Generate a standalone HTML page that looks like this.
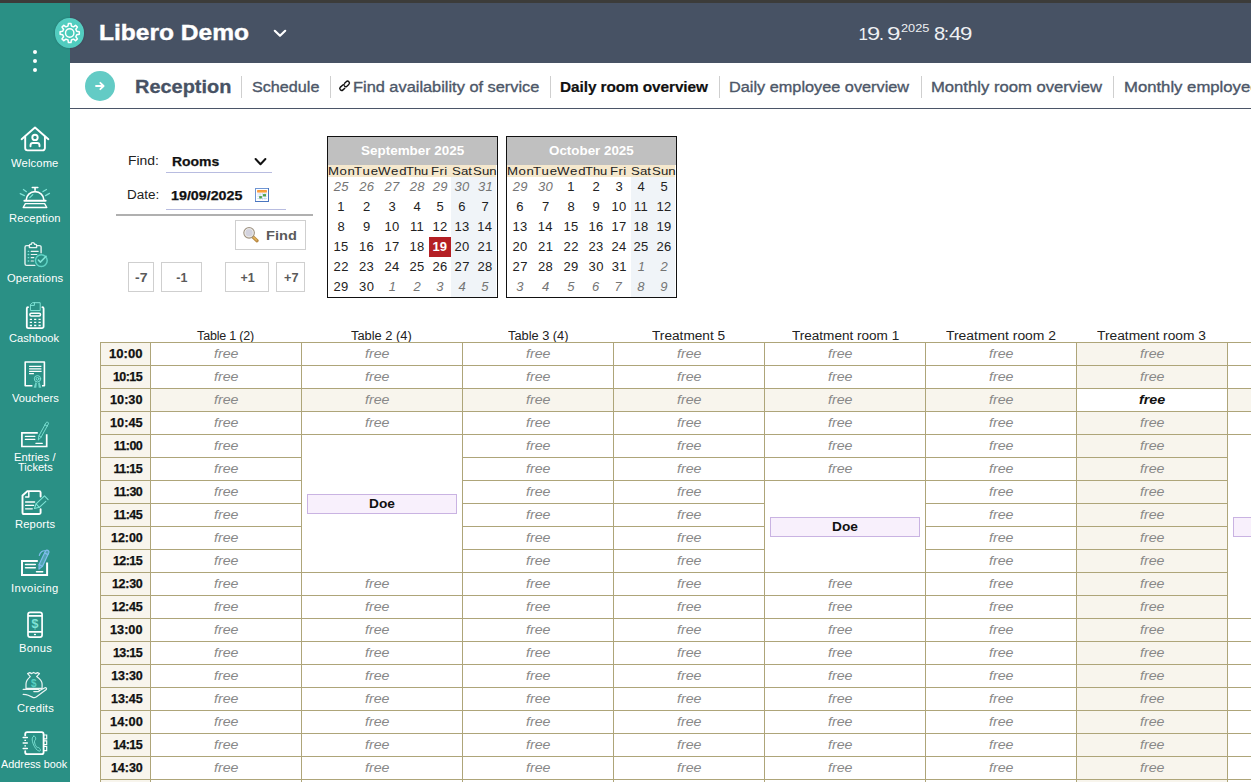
<!DOCTYPE html>
<html><head><meta charset="utf-8"><title>Reception</title>
<style>
*{box-sizing:border-box;margin:0;padding:0}
html,body{width:1251px;height:782px;overflow:hidden;background:#fff}
body{position:relative;font-family:"Liberation Sans", sans-serif;color:#222}
.abs{position:absolute}
#topstrip{left:0;top:0;width:1251px;height:3px;background:#3c3c3a;z-index:5}
#side{left:0;top:0;width:70px;height:782px;background:#2a9085}
#head{left:70px;top:0;width:1181px;height:63px;background:#475264}
#nav{left:70px;top:63px;width:1181px;height:46px;background:#fff;border-bottom:1px solid #4b5567}
.t{position:absolute;white-space:nowrap}
.sep{position:absolute;top:76px;width:1px;height:22px;background:#cfcfcf}
.cell{position:absolute;border:1px solid #aea579;background:#fff}
.cr{background:#f8f5ed}
.tm{position:absolute;border:1px solid #aea579;background:#f8f5ed}
.doe{position:absolute;height:20px;width:150px;background:#f8f0fc;border:1px solid #c9b3e2}
.btn{position:absolute;border:1px solid #cfcfcf;background:#fff}
.cal{position:absolute;top:136px;width:171px;height:162px;border:1px solid #111;background:#fff}
.calh{position:absolute;left:0;top:0;width:169px;height:28px;background:#c0c0c0}
.calw{position:absolute;left:0;top:28px;width:168px;height:12px;background:#f5e8cd}
.we{position:absolute;top:40px;height:120px;background:#f0f4f8}
</style></head>
<body>
<div id="side" class="abs"></div>
<div id="head" class="abs"></div>
<div id="topstrip" class="abs"></div>
<div id="nav" class="abs"></div>
<header>
<div class="abs" style="left:54.6px;top:18px;width:29.6px;height:29.6px;border-radius:50%;background:radial-gradient(circle at 50% 55%,#4acbb9 0%,#52cdc0 60%,#63d3ca 100%);box-shadow:0 0 2px rgba(20,40,50,.35)"></div>
<svg class="abs" style="left:50px;top:14px" width="40" height="40" viewBox="50 14 40 40" fill="none" stroke="#fff" stroke-linejoin="round"><path d="M68.02 26.00 L68.41 23.39 L70.99 23.39 L71.38 26.00 L73.46 26.86 L75.58 25.29 L77.41 27.12 L75.84 29.24 L76.70 31.32 L79.31 31.71 L79.31 34.29 L76.70 34.68 L75.84 36.76 L77.41 38.88 L75.58 40.71 L73.46 39.14 L71.38 40.00 L70.99 42.61 L68.41 42.61 L68.02 40.00 L65.94 39.14 L63.82 40.71 L61.99 38.88 L63.56 36.76 L62.70 34.68 L60.09 34.29 L60.09 31.71 L62.70 31.32 L63.56 29.24 L61.99 27.12 L63.82 25.29 L65.94 26.86 Z" stroke-width="1.5"/><circle cx="69.7" cy="33" r="4.2" stroke-width="1.4"/></svg>
<div class="t" style="left:99.28px;top:20.00px;font-size:22.5px;line-height:25px;color:#fff;letter-spacing:0.000px;font-weight:bold;-webkit-text-stroke:0.4px #fff;transform:scaleX(1.091);transform-origin:0 0;">Libero Demo</div>
<svg class="abs" style="left:273px;top:27px" width="14" height="12" viewBox="0 0 14 12"><path d="M1.8 3.8 L7 8.8 L12.2 3.8" fill="none" stroke="#fff" stroke-width="2.2" stroke-linecap="round" stroke-linejoin="round"/></svg>
<div class="t" style="left:858.56px;top:25.00px;font-size:17px;line-height:19px;color:#eef0f3;letter-spacing:0.000px;">1</div>
<div class="t" style="left:866.81px;top:24.00px;font-size:18px;line-height:20px;color:#eef0f3;letter-spacing:0.000px;transform:scaleX(1.320);transform-origin:0 0;">9</div>
<div class="t" style="left:878.59px;top:24.00px;font-size:18px;line-height:20px;color:#eef0f3;letter-spacing:0.000px;transform:scaleX(0.984);transform-origin:0 0;">.</div>
<div class="t" style="left:886.89px;top:24.00px;font-size:18px;line-height:20px;color:#eef0f3;letter-spacing:0.000px;transform:scaleX(1.344);transform-origin:0 0;">9</div>
<div class="t" style="left:898.18px;top:24.00px;font-size:18px;line-height:20px;color:#eef0f3;letter-spacing:0.000px;transform:scaleX(0.868);transform-origin:0 0;">.</div>
<div class="t" style="left:933.63px;top:24.00px;font-size:18px;line-height:20px;color:#eef0f3;letter-spacing:0.000px;transform:scaleX(1.123);transform-origin:0 0;">8</div>
<div class="t" style="left:944.39px;top:24.00px;font-size:18px;line-height:20px;color:#eef0f3;letter-spacing:0.000px;transform:scaleX(0.984);transform-origin:0 0;">:</div>
<div class="t" style="left:948.51px;top:24.00px;font-size:18px;line-height:20px;color:#eef0f3;letter-spacing:0.000px;transform:scaleX(1.232);transform-origin:0 0;">4</div>
<div class="t" style="left:959.78px;top:24.00px;font-size:18px;line-height:20px;color:#eef0f3;letter-spacing:0.000px;transform:scaleX(1.236);transform-origin:0 0;">9</div>
<div class="t" style="left:901.36px;top:22.00px;font-size:11.5px;line-height:12px;color:#eef0f3;letter-spacing:0.000px;transform:scaleX(1.109);transform-origin:0 0;">2025</div>
</header>
<aside>
<div class="abs" style="left:33px;top:50px;width:4px;height:4px;border-radius:50%;background:#fff"></div>
<div class="abs" style="left:33px;top:59px;width:4px;height:4px;border-radius:50%;background:#fff"></div>
<div class="abs" style="left:33px;top:68px;width:4px;height:4px;border-radius:50%;background:#fff"></div>
</aside>
<nav>
<div class="abs" style="left:85px;top:71px;width:30px;height:30px;border-radius:50%;background:#63cbc5"></div>
<svg class="abs" style="left:94px;top:80px" width="12" height="12" viewBox="0 0 12 12"><path d="M2 6 H9.5 M6.3 2.8 L9.6 6 L6.3 9.2" fill="none" stroke="#fff" stroke-width="1.8" stroke-linecap="round" stroke-linejoin="round"/></svg>
<div class="t" style="left:134.98px;top:76.00px;font-size:18.5px;line-height:21px;color:#475264;letter-spacing:0.000px;font-weight:bold;-webkit-text-stroke:0.3px #475264;transform:scaleX(1.077);transform-origin:0 0;">Reception</div>
<div class="t" style="left:252.07px;top:78.00px;font-size:15.4px;line-height:17px;color:#4d5768;letter-spacing:0.000px;-webkit-text-stroke:0.35px #4d5768;transform:scaleX(1.050);transform-origin:0 0;">Schedule</div>
<div class="t" style="left:352.76px;top:78.00px;font-size:15.4px;line-height:17px;color:#4d5768;letter-spacing:0.000px;-webkit-text-stroke:0.35px #4d5768;transform:scaleX(1.063);transform-origin:0 0;">Find availability of service</div>
<div class="t" style="left:560.08px;top:78.00px;font-size:15.4px;line-height:17px;color:#111;letter-spacing:-0.100px;font-weight:bold;-webkit-text-stroke:0.2px #111;">Daily room overview</div>
<div class="t" style="left:729.26px;top:78.00px;font-size:15.4px;line-height:17px;color:#4d5768;letter-spacing:0.000px;-webkit-text-stroke:0.35px #4d5768;transform:scaleX(1.058);transform-origin:0 0;">Daily employee overview</div>
<div class="t" style="left:931.34px;top:78.00px;font-size:15.4px;line-height:17px;color:#4d5768;letter-spacing:0.000px;-webkit-text-stroke:0.35px #4d5768;transform:scaleX(1.081);transform-origin:0 0;">Monthly room overview</div>
<div class="t" style="left:1124.03px;top:78.00px;font-size:15.4px;line-height:17px;color:#4d5768;letter-spacing:0.000px;-webkit-text-stroke:0.35px #4d5768;transform:scaleX(1.085);transform-origin:0 0;">Monthly employee overview</div>
<div class="sep" style="left:241px"></div>
<div class="sep" style="left:330px"></div>
<div class="sep" style="left:550px"></div>
<div class="sep" style="left:719px"></div>
<div class="sep" style="left:921px"></div>
<div class="sep" style="left:1113px"></div>
<svg class="abs" style="left:334px;top:76px" width="24" height="24" viewBox="334 76 24 24" fill="none" stroke="#111" stroke-width="1.55"><g transform="translate(344.6,85.8) rotate(-43) scale(0.9)"><path d="M-1.2 2.1 H-4.4 a2.1 2.1 0 0 1 0 -4.2 H-1.6 a2.1 2.1 0 0 1 2.1 2.1"/><path d="M1.2 -2.1 H4.4 a2.1 2.1 0 0 1 0 4.2 H1.6 a2.1 2.1 0 0 1 -2.1 -2.1"/></g></svg>
</nav>
<aside>
<div class="t" style="left:11.46px;top:158.00px;font-size:10px;line-height:11px;color:#fff;letter-spacing:0.129px;transform:scaleX(1.120);transform-origin:0 0;">Welcome</div>
<div class="t" style="left:9.08px;top:213.00px;font-size:10px;line-height:11px;color:#fff;letter-spacing:0.123px;transform:scaleX(1.120);transform-origin:0 0;">Reception</div>
<div class="t" style="left:6.87px;top:273.00px;font-size:10px;line-height:11px;color:#fff;letter-spacing:0.133px;transform:scaleX(1.120);transform-origin:0 0;">Operations</div>
<div class="t" style="left:9.44px;top:333.00px;font-size:10px;line-height:11px;color:#fff;letter-spacing:0.000px;transform:scaleX(1.113);transform-origin:0 0;">Cashbook</div>
<div class="t" style="left:11.96px;top:393.00px;font-size:10px;line-height:11px;color:#fff;letter-spacing:0.007px;transform:scaleX(1.120);transform-origin:0 0;">Vouchers</div>
<div class="t" style="left:13.68px;top:452.00px;font-size:10px;line-height:11px;color:#fff;letter-spacing:0.060px;transform:scaleX(1.120);transform-origin:0 0;">Entries /</div>
<div class="t" style="left:17.86px;top:462.00px;font-size:10px;line-height:11px;color:#fff;letter-spacing:0.000px;transform:scaleX(1.110);transform-origin:0 0;">Tickets</div>
<div class="t" style="left:14.88px;top:519.00px;font-size:10px;line-height:11px;color:#fff;letter-spacing:0.121px;transform:scaleX(1.120);transform-origin:0 0;">Reports</div>
<div class="t" style="left:10.97px;top:583.00px;font-size:10px;line-height:11px;color:#fff;letter-spacing:0.351px;transform:scaleX(1.120);transform-origin:0 0;">Invoicing</div>
<div class="t" style="left:18.58px;top:643.00px;font-size:10px;line-height:11px;color:#fff;letter-spacing:0.239px;transform:scaleX(1.120);transform-origin:0 0;">Bonus</div>
<div class="t" style="left:16.64px;top:703.00px;font-size:10px;line-height:11px;color:#fff;letter-spacing:0.191px;transform:scaleX(1.120);transform-origin:0 0;">Credits</div>
<div class="t" style="left:1.18px;top:759.00px;font-size:10px;line-height:11px;color:#fff;letter-spacing:0.000px;transform:scaleX(1.084);transform-origin:0 0;">Address book</div>
<svg class="abs" style="left:0;top:0" width="70" height="782" viewBox="0 0 70 782" fill="none" stroke-linecap="round" stroke-linejoin="round"><g stroke="#ffffff" stroke-width="1.9"><path d="M21.6 139.2 L35 127.5 L48.4 139.2"/><path d="M25.2 136.6 V148.1 a2.3 2.3 0 0 0 2.3 2.3 H42.6 a2.3 2.3 0 0 0 2.3 -2.3 V136.6"/><circle cx="35" cy="137.4" r="2.7"/><path d="M30.5 146.3 v-0.9 a2.4 2.4 0 0 1 2.4 -2.4 h4.2 a2.4 2.4 0 0 1 2.4 2.4 v0.9"/></g><g stroke="#ffffff" stroke-width="1.6"><path d="M32.3 187.5 H37.8 M35.05 187.5 V190.2"/><path d="M26.2 200 a8.85 8.4 0 0 1 17.7 0"/><path d="M24.4 200.8 H45.6" stroke-width="2"/><path d="M25.4 203.6 H44.6 L46.8 207.5 H23.2 Z" stroke-width="1.4"/></g><g stroke="#7fe3d6" stroke-width="1.2"><path d="M29.8 197.6 L32.8 194.6"/><path d="M23.4 189.5 L26.4 191.7"/><path d="M20.2 193.6 L24.4 195.6"/><path d="M43 191.6 L46.5 189.5"/><path d="M45.5 195.6 L49.5 193.4"/></g><g stroke="#ffffff" stroke-opacity="0.88" stroke-width="1.4"><path d="M29.2 245.6 H26.6 a1.6 1.6 0 0 0 -1.6 1.6 V263.8 a1.6 1.6 0 0 0 1.6 1.6 H34.8"/><path d="M36.8 245.6 H39.5 a1.6 1.6 0 0 1 1.6 1.6 V252.8"/><path d="M29.4 247.6 V245.2 a0.8 0.8 0 0 1 0.8 -0.8 H31.2 a1.75 1.75 0 0 1 3.5 0 H35.8 a0.8 0.8 0 0 1 0.8 0.8 V247.6 Z"/></g><g stroke="#7fe3d6" stroke-width="1.3"><path d="M28.2 251.3 h0.5 M28.2 254.5 h0.5 M28.2 257.7 h0.5 M28.2 261 h0.5"/></g><g stroke="#ffffff" stroke-opacity="0.9" stroke-width="1.2"><path d="M31.2 251.3 H38.2 M31.2 254.5 H36.8 M31.2 257.7 H33.8 M31.2 261 H33.4"/></g><g stroke="#5fd3c5" stroke-width="1.5"><circle cx="41.3" cy="260.6" r="5.9"/><path d="M38.4 260.1 L40.4 262.1 L46.1 256.3" stroke="#7fe3d6"/></g><g stroke="#ffffff" stroke-width="1.8"><path d="M28 307.2 a1.2 1.2 0 0 0 -1.2 1.2 V326.6 a1.6 1.6 0 0 0 1.6 1.6 H42 a1.6 1.6 0 0 0 1.6 -1.6 V308.4 a1.2 1.2 0 0 0 -1.2 -1.2"/><rect x="29.9" y="313.2" width="10.6" height="2.8" rx="1.2" stroke-width="1.5"/></g><g stroke="#7fe3d6" stroke-width="1"><path d="M30.4 310.2 V304.6 L32.6 302.7 H40.2 V310.2 Z"/><path d="M30.4 305.4 H34.4 V302.7"/></g><path d="M29.8 319.4 h2.2 M34.1 319.4 h2.2 M38.5 319.4 h2.2 M29.8 322.4 h2.2 M34.1 322.4 h2.2 M38.5 322.4 h2.2 M29.8 325.5 h2.2 M34.1 325.5 h2.2 M38.5 325.5 h2.2 " stroke="#ffffff" stroke-width="1.3" stroke-linecap="butt"/><g stroke="#ffffff" stroke-width="1.6" stroke-linecap="square"><path d="M31.6 385.8 H25.2 V362 H44.4 V385.8 H42.8"/></g><g stroke="#ffffff" stroke-width="1.25" stroke-linecap="butt"><path d="M29.1 366.3 H41.4 M29.1 368.8 H41.4 M29.1 371.4 H41.6 M29.1 373.7 H33.9"/></g><g stroke="#7fe3d6" stroke-width="1" fill="none"><circle cx="37.5" cy="378.8" r="3.2"/><circle cx="37.5" cy="378.8" r="1.4"/><path d="M35.4 382.2 L33.7 387.7 L36.3 387.7 L36.9 383 Z" fill="#7fe3d6" fill-opacity="0.8" stroke="none"/><path d="M39.6 382.2 L41.3 387.7 L38.7 387.7 L38.1 383 Z" fill="#7fe3d6" fill-opacity="0.8" stroke="none"/></g><g stroke="#ffffff" stroke-width="1.7" stroke-linecap="butt" stroke-linejoin="miter"><path d="M37.8 432.8 H21.9 V446.5 H46.7 V434.2"/></g><g stroke="#ffffff" stroke-width="1.3"><path d="M25.4 436.4 H34.8 M25.4 439.4 H34.8 M35.9 443.3 H42.3"/></g><g stroke="#7fe3d6" stroke-width="0.9"><path d="M38.3 439.7 L38.9 435.9 L46.1 422.7 A1.3 1.3 0 0 1 48.4 423.9 L41.1 437.1 Z"/><path d="M38.9 435.9 L41.1 437.1 M44.9 424.9 L47.2 426.1"/></g><g stroke="#ffffff" stroke-width="1.9"><path d="M40.6 496.6 V492.6 a1.5 1.5 0 0 0 -1.5 -1.5 H27.6 L22.5 495.4 V512.4 a1.6 1.6 0 0 0 1.6 1.6 H39 a1.6 1.6 0 0 0 1.6 -1.6 V509.2"/><path d="M28.8 491.8 V497 H25.6" stroke-width="1.5"/></g><g stroke="#ffffff" stroke-width="1.35"><path d="M25.6 502 H34.6 M25.6 505.4 H33.6 M25.6 508.8 H32.3"/></g><g stroke="#7fe3d6" stroke-width="1.1"><path d="M34.5 508.5 L36.1 503.8 L44.5 495.9 L48.1 499.6"/><path d="M45.8 501.3 L39.3 507.3 L34.5 508.5"/><path d="M36.1 503.8 L39.3 507.3"/></g><g stroke="#ffffff" stroke-width="2" stroke-linecap="butt" stroke-linejoin="miter"><path d="M37.8 561 H22 V575 H47.1 V562.6"/></g><g stroke="#ffffff" stroke-width="1.5"><path d="M25.5 564.6 H35.3 M25.5 567.8 H35.3 M36.5 571.7 H42.7"/></g><g stroke="#7fbcec" stroke-width="1.2" fill="#7fbcec" fill-opacity="0.45"><path d="M39 569.1 L39.1 564.6 L45.5 551 A1.9 1.9 0 0 1 48.9 552.6 L42.5 566.3 Z"/><path d="M45.4 550.9 C42.6 550.2 40 552.4 39.3 555.5" fill="none"/><path d="M44.6 553 L47.9 554.6 M39.1 564.6 L42.5 566.3" fill="none"/></g><g stroke="#ffffff" stroke-width="1.7"><rect x="28" y="612.3" width="14.1" height="24.8" rx="2.2"/><path d="M28 615.8 H42.1 M28 631.9 H42.1" stroke-linecap="butt"/><path d="M34.6 634.6 h0.7" stroke-width="1.5"/></g><text x="35" y="628.2" text-anchor="middle" font-family="Liberation Sans, sans-serif" font-weight="bold" font-size="12.5" fill="#7fe3d6" stroke="none">$</text><g stroke="#ffffff" stroke-opacity="0.9" stroke-width="1.2"><path d="M27.6 673.6 L30.3 676.6 C27.4 679 26 681.4 26 684 V688.4 H42.1 V684 C42.1 681.4 40 679 36.6 676.6 L39.5 673.6 L37.5 672.6 L35.6 673.6 L33.6 672.4 L31.7 673.6 L29.8 672.6 Z"/><path d="M23.2 689.4 H38.2 a1.1 1.1 0 0 1 0 2.2 H33.8"/><path d="M39.4 690.6 L45 687.8 a1.1 1.1 0 0 1 1.3 1.7 L36.2 696.9 a3.2 3.2 0 0 1 -3.4 0.5 L28.2 695.2 C26.6 694.5 25 694.4 23.2 694.4"/></g><text x="33.8" y="686.6" text-anchor="middle" font-family="Liberation Sans, sans-serif" font-weight="bold" font-size="10" fill="#58cfc1" stroke="none">$</text><g stroke="#ffffff" stroke-width="1.8"><path d="M25.2 735.4 V734.2 a2 2 0 0 1 2 -2 H41.6 a2 2 0 0 1 2 2 V752.2 a2 2 0 0 1 -2 2 H27.2 a2 2 0 0 1 -2 -2 V751.2" /><path d="M25.2 739.8 V741 M25.2 745.2 V746.6" stroke-width="1.6" stroke-linecap="butt"/></g><g stroke="#ffffff" stroke-width="1.5"><path d="M23.2 737.5 H27.3 M23.2 742.9 H27.3 M23.2 748.4 H27.3"/></g><g stroke="#ffffff" stroke-width="1.15" stroke-linecap="butt" stroke-linejoin="miter"><path d="M44 735 H46.7 V738.9 H44 M44 740.8 H46.7 V744.6 H44 M44 746.5 H46.7 V750.6 H44"/></g><g stroke="#7fe3d6" stroke-width="0.9"><path d="M33.4 736.3 c-1.6 0.8 -1.7 3.8 -0.2 7.6 c1.5 3.8 3.8 6.8 5.9 7.2 c1.2 0.2 1.7 -0.8 1.2 -1.8 c-0.5 -1 -1.7 -2 -2.7 -1.9 c-0.9 0.1 -1.6 -0.9 -2.4 -2.9 c-0.8 -2 -1 -3.6 -0.3 -4.1 c0.9 -0.6 1 -2.2 0.5 -3.2 c-0.5 -1 -1.3 -1.3 -2 -0.9 z"/></g></svg>
</aside>
<section id="filters">
<div class="t" style="left:128.36px;top:154.00px;font-size:12.5px;line-height:14px;color:#222;letter-spacing:0.000px;transform:scaleX(1.112);transform-origin:0 0;">Find:</div>
<div class="t" style="left:172.28px;top:154.00px;font-size:13px;line-height:15px;color:#111;letter-spacing:-0.000px;font-weight:bold;-webkit-text-stroke:0.25px #111;transform:scaleX(1.073);transform-origin:0 0;">Rooms</div>
<svg class="abs" style="left:253px;top:156px" width="15" height="12" viewBox="0 0 15 12"><path d="M2.6 3 L7.5 8.2 L12.4 3" fill="none" stroke="#111" stroke-width="2" stroke-linecap="round" stroke-linejoin="round"/></svg>
<div class="abs" style="left:166px;top:172px;width:106px;height:1px;background:#b8bce0"></div>
<div class="t" style="left:126.99px;top:188.00px;font-size:12.5px;line-height:14px;color:#222;letter-spacing:0.000px;transform:scaleX(1.079);transform-origin:0 0;">Date:</div>
<div class="t" style="left:170.51px;top:188.00px;font-size:13px;line-height:15px;color:#111;letter-spacing:0.000px;font-weight:bold;-webkit-text-stroke:0.25px #111;transform:scaleX(1.098);transform-origin:0 0;">19/09/2025</div>
<svg class="abs" style="left:254px;top:187px" width="16" height="16" viewBox="254 187 16 16"><rect x="255.5" y="188.5" width="13" height="13" fill="#fff" stroke="#7096d3" stroke-width="1"/><path d="M255 201.5 H269 M268.5 188 V202" stroke="#4a76bf" stroke-width="1" fill="none"/><rect x="257.2" y="190.1" width="9.6" height="2.4" fill="#f6862a"/><rect x="258" y="190.8" width="8" height="1" fill="#fbb03b"/><path d="M257.5 194 H267 M257.5 196.2 H267 M257.5 198.5 H267 M260 193.5 V200 M262.5 193.5 V200 M265 193.5 V200" stroke="#a9c6ea" stroke-width="0.8" stroke-dasharray="1.2 0.8" fill="none"/><rect x="263" y="194.1" width="3" height="2.3" fill="#4ea34a"/><rect x="259.2" y="196.1" width="2.7" height="2.3" fill="#4ea34a"/></svg>
<div class="abs" style="left:166px;top:209px;width:120px;height:1px;background:#b8bce0"></div>
<div class="abs" style="left:116px;top:214px;width:197px;height:2px;background:#b0b0b0"></div>
<div class="btn" style="left:235px;top:220px;width:71px;height:30px"></div>
<div class="t" style="left:266.24px;top:228.00px;font-size:13px;line-height:15px;color:#5a5a5a;letter-spacing:0.055px;font-weight:bold;transform:scaleX(1.120);transform-origin:0 0;">Find</div>
<svg class="abs" style="left:240px;top:224px" width="22" height="22" viewBox="240 224 22 22"><path d="M253 237 L257 240.7" stroke="#b98a45" stroke-width="3.3" stroke-linecap="round"/><path d="M253.2 237 L256.4 240" stroke="#e2b45a" stroke-width="1.6" stroke-linecap="round"/><circle cx="249.1" cy="232.8" r="5.2" fill="#d3d3de" stroke="#a09483" stroke-width="1.3"/><circle cx="249.1" cy="232.8" r="4.1" fill="none" stroke="#f3f0ea" stroke-width="0.9"/></svg>
<div class="btn" style="left:128px;top:262px;width:26px;height:30px"></div>
<div class="t" style="left:135.15px;top:271.00px;font-size:12.5px;line-height:14px;color:#5a5a5a;letter-spacing:0.180px;font-weight:bold;transform:scaleX(1.120);transform-origin:0 0;">-7</div>
<div class="btn" style="left:161px;top:262px;width:41px;height:30px"></div>
<div class="t" style="left:176.31px;top:271.00px;font-size:12.5px;line-height:14px;color:#5a5a5a;letter-spacing:0.000px;font-weight:bold;">-1</div>
<div class="btn" style="left:225px;top:262px;width:44px;height:30px"></div>
<div class="t" style="left:240.47px;top:271.00px;font-size:12.5px;line-height:14px;color:#5a5a5a;letter-spacing:0.000px;font-weight:bold;">+1</div>
<div class="btn" style="left:276px;top:262px;width:29px;height:30px"></div>
<div class="t" style="left:283.67px;top:271.00px;font-size:12.5px;line-height:14px;color:#5a5a5a;letter-spacing:0.000px;font-weight:bold;transform:scaleX(1.016);transform-origin:0 0;">+7</div>
</section>
<section id="calendars">
<div class="cal" style="left:327px"><div class="calh"></div><div class="calw"></div><div class="we" style="left:123px;width:45px"></div></div>
<div class="t" style="left:361.02px;top:144.00px;font-size:12.5px;line-height:14px;color:#fff;letter-spacing:0.000px;font-weight:bold;transform:scaleX(1.076);transform-origin:0 0;">September 2025</div>
<div class="t" style="left:327.52px;top:164.00px;font-size:11.8px;line-height:14px;color:#222;letter-spacing:0.502px;transform:scaleX(1.120);transform-origin:0 0;">Mon</div>
<div class="t" style="left:354.11px;top:164.00px;font-size:11.8px;line-height:14px;color:#222;letter-spacing:0.844px;transform:scaleX(1.120);transform-origin:0 0;">Tue</div>
<div class="t" style="left:378.35px;top:164.00px;font-size:11.8px;line-height:14px;color:#222;letter-spacing:0.698px;transform:scaleX(1.120);transform-origin:0 0;">Wed</div>
<div class="t" style="left:406.42px;top:164.00px;font-size:11.8px;line-height:14px;color:#222;letter-spacing:0.000px;transform:scaleX(1.094);transform-origin:0 0;">Thu</div>
<div class="t" style="left:431.42px;top:164.00px;font-size:11.8px;line-height:14px;color:#222;letter-spacing:0.384px;transform:scaleX(1.120);transform-origin:0 0;">Fri</div>
<div class="t" style="left:452.31px;top:164.00px;font-size:11.8px;line-height:14px;color:#222;letter-spacing:0.067px;transform:scaleX(1.120);transform-origin:0 0;">Sat</div>
<div class="t" style="left:473.41px;top:164.00px;font-size:11.8px;line-height:14px;color:#222;letter-spacing:0.058px;transform:scaleX(1.120);transform-origin:0 0;">Sun</div>
<div class="t" style="left:333.64px;top:179.00px;font-size:13px;line-height:15px;color:#747474;letter-spacing:0.300px;font-style:italic;">25</div>
<div class="t" style="left:359.15px;top:179.00px;font-size:13px;line-height:15px;color:#747474;letter-spacing:0.300px;font-style:italic;">26</div>
<div class="t" style="left:384.46px;top:179.00px;font-size:13px;line-height:15px;color:#747474;letter-spacing:0.300px;font-style:italic;">27</div>
<div class="t" style="left:409.69px;top:179.00px;font-size:13px;line-height:15px;color:#747474;letter-spacing:0.300px;font-style:italic;">28</div>
<div class="t" style="left:432.79px;top:179.00px;font-size:13px;line-height:15px;color:#747474;letter-spacing:0.300px;font-style:italic;">29</div>
<div class="t" style="left:454.52px;top:179.00px;font-size:13px;line-height:15px;color:#747474;letter-spacing:0.300px;font-style:italic;">30</div>
<div class="t" style="left:478.02px;top:179.00px;font-size:13px;line-height:15px;color:#747474;letter-spacing:0.300px;font-style:italic;">31</div>
<div class="t" style="left:337.20px;top:199.00px;font-size:13px;line-height:15px;color:#222;letter-spacing:0.300px;">1</div>
<div class="t" style="left:362.89px;top:199.00px;font-size:13px;line-height:15px;color:#222;letter-spacing:0.300px;">2</div>
<div class="t" style="left:388.42px;top:199.00px;font-size:13px;line-height:15px;color:#222;letter-spacing:0.300px;">3</div>
<div class="t" style="left:413.43px;top:199.00px;font-size:13px;line-height:15px;color:#222;letter-spacing:0.300px;">4</div>
<div class="t" style="left:436.39px;top:199.00px;font-size:13px;line-height:15px;color:#222;letter-spacing:0.300px;">5</div>
<div class="t" style="left:458.34px;top:199.00px;font-size:13px;line-height:15px;color:#222;letter-spacing:0.300px;">6</div>
<div class="t" style="left:481.38px;top:199.00px;font-size:13px;line-height:15px;color:#222;letter-spacing:0.300px;">7</div>
<div class="t" style="left:337.39px;top:219.00px;font-size:13px;line-height:15px;color:#222;letter-spacing:0.300px;">8</div>
<div class="t" style="left:362.89px;top:219.00px;font-size:13px;line-height:15px;color:#222;letter-spacing:0.300px;">9</div>
<div class="t" style="left:384.38px;top:219.00px;font-size:13px;line-height:15px;color:#222;letter-spacing:0.300px;">10</div>
<div class="t" style="left:409.92px;top:219.00px;font-size:13px;line-height:15px;color:#222;letter-spacing:0.300px;">11</div>
<div class="t" style="left:432.45px;top:219.00px;font-size:13px;line-height:15px;color:#222;letter-spacing:0.300px;">12</div>
<div class="t" style="left:454.41px;top:219.00px;font-size:13px;line-height:15px;color:#222;letter-spacing:0.300px;">13</div>
<div class="t" style="left:477.32px;top:219.00px;font-size:13px;line-height:15px;color:#222;letter-spacing:0.300px;">14</div>
<div class="t" style="left:333.39px;top:239.00px;font-size:13px;line-height:15px;color:#222;letter-spacing:0.300px;">15</div>
<div class="t" style="left:358.91px;top:239.00px;font-size:13px;line-height:15px;color:#222;letter-spacing:0.300px;">16</div>
<div class="t" style="left:384.45px;top:239.00px;font-size:13px;line-height:15px;color:#222;letter-spacing:0.300px;">17</div>
<div class="t" style="left:409.41px;top:239.00px;font-size:13px;line-height:15px;color:#222;letter-spacing:0.300px;">18</div>
<div class="abs" style="left:429px;top:237px;width:22px;height:20px;background:#b41f24"></div>
<div class="t" style="left:432.60px;top:239.00px;font-size:13px;line-height:15px;color:#fff;letter-spacing:0.000px;font-weight:bold;">19</div>
<div class="t" style="left:454.54px;top:239.00px;font-size:13px;line-height:15px;color:#222;letter-spacing:0.300px;">20</div>
<div class="t" style="left:477.61px;top:239.00px;font-size:13px;line-height:15px;color:#222;letter-spacing:0.300px;">21</div>
<div class="t" style="left:333.62px;top:259.00px;font-size:13px;line-height:15px;color:#222;letter-spacing:0.300px;">22</div>
<div class="t" style="left:359.08px;top:259.00px;font-size:13px;line-height:15px;color:#222;letter-spacing:0.300px;">23</div>
<div class="t" style="left:384.49px;top:259.00px;font-size:13px;line-height:15px;color:#222;letter-spacing:0.300px;">24</div>
<div class="t" style="left:409.56px;top:259.00px;font-size:13px;line-height:15px;color:#222;letter-spacing:0.300px;">25</div>
<div class="t" style="left:432.58px;top:259.00px;font-size:13px;line-height:15px;color:#222;letter-spacing:0.300px;">26</div>
<div class="t" style="left:454.62px;top:259.00px;font-size:13px;line-height:15px;color:#222;letter-spacing:0.300px;">27</div>
<div class="t" style="left:477.58px;top:259.00px;font-size:13px;line-height:15px;color:#222;letter-spacing:0.300px;">28</div>
<div class="t" style="left:333.60px;top:279.00px;font-size:13px;line-height:15px;color:#222;letter-spacing:0.300px;">29</div>
<div class="t" style="left:359.12px;top:279.00px;font-size:13px;line-height:15px;color:#222;letter-spacing:0.300px;">30</div>
<div class="t" style="left:388.77px;top:279.00px;font-size:13px;line-height:15px;color:#747474;letter-spacing:0.300px;font-style:italic;">1</div>
<div class="t" style="left:413.52px;top:279.00px;font-size:13px;line-height:15px;color:#747474;letter-spacing:0.300px;font-style:italic;">2</div>
<div class="t" style="left:436.29px;top:279.00px;font-size:13px;line-height:15px;color:#747474;letter-spacing:0.300px;font-style:italic;">3</div>
<div class="t" style="left:458.59px;top:279.00px;font-size:13px;line-height:15px;color:#747474;letter-spacing:0.300px;font-style:italic;">4</div>
<div class="t" style="left:481.22px;top:279.00px;font-size:13px;line-height:15px;color:#747474;letter-spacing:0.300px;font-style:italic;">5</div>
<div class="cal" style="left:506px"><div class="calh"></div><div class="calw"></div><div class="we" style="left:124px;width:44px"></div></div>
<div class="t" style="left:549.25px;top:144.00px;font-size:12.5px;line-height:14px;color:#fff;letter-spacing:0.000px;font-weight:bold;transform:scaleX(1.070);transform-origin:0 0;">October 2025</div>
<div class="t" style="left:506.52px;top:164.00px;font-size:11.8px;line-height:14px;color:#222;letter-spacing:0.502px;transform:scaleX(1.120);transform-origin:0 0;">Mon</div>
<div class="t" style="left:533.11px;top:164.00px;font-size:11.8px;line-height:14px;color:#222;letter-spacing:0.844px;transform:scaleX(1.120);transform-origin:0 0;">Tue</div>
<div class="t" style="left:557.35px;top:164.00px;font-size:11.8px;line-height:14px;color:#222;letter-spacing:0.698px;transform:scaleX(1.120);transform-origin:0 0;">Wed</div>
<div class="t" style="left:585.42px;top:164.00px;font-size:11.8px;line-height:14px;color:#222;letter-spacing:0.000px;transform:scaleX(1.094);transform-origin:0 0;">Thu</div>
<div class="t" style="left:610.42px;top:164.00px;font-size:11.8px;line-height:14px;color:#222;letter-spacing:0.384px;transform:scaleX(1.120);transform-origin:0 0;">Fri</div>
<div class="t" style="left:631.31px;top:164.00px;font-size:11.8px;line-height:14px;color:#222;letter-spacing:0.067px;transform:scaleX(1.120);transform-origin:0 0;">Sat</div>
<div class="t" style="left:652.41px;top:164.00px;font-size:11.8px;line-height:14px;color:#222;letter-spacing:0.058px;transform:scaleX(1.120);transform-origin:0 0;">Sun</div>
<div class="t" style="left:512.79px;top:179.00px;font-size:13px;line-height:15px;color:#747474;letter-spacing:0.300px;font-style:italic;">29</div>
<div class="t" style="left:538.02px;top:179.00px;font-size:13px;line-height:15px;color:#747474;letter-spacing:0.300px;font-style:italic;">30</div>
<div class="t" style="left:567.20px;top:179.00px;font-size:13px;line-height:15px;color:#222;letter-spacing:0.300px;">1</div>
<div class="t" style="left:592.39px;top:179.00px;font-size:13px;line-height:15px;color:#222;letter-spacing:0.300px;">2</div>
<div class="t" style="left:615.42px;top:179.00px;font-size:13px;line-height:15px;color:#222;letter-spacing:0.300px;">3</div>
<div class="t" style="left:637.43px;top:179.00px;font-size:13px;line-height:15px;color:#222;letter-spacing:0.300px;">4</div>
<div class="t" style="left:660.39px;top:179.00px;font-size:13px;line-height:15px;color:#222;letter-spacing:0.300px;">5</div>
<div class="t" style="left:516.34px;top:199.00px;font-size:13px;line-height:15px;color:#222;letter-spacing:0.300px;">6</div>
<div class="t" style="left:541.88px;top:199.00px;font-size:13px;line-height:15px;color:#222;letter-spacing:0.300px;">7</div>
<div class="t" style="left:567.39px;top:199.00px;font-size:13px;line-height:15px;color:#222;letter-spacing:0.300px;">8</div>
<div class="t" style="left:592.39px;top:199.00px;font-size:13px;line-height:15px;color:#222;letter-spacing:0.300px;">9</div>
<div class="t" style="left:611.38px;top:199.00px;font-size:13px;line-height:15px;color:#222;letter-spacing:0.300px;">10</div>
<div class="t" style="left:633.92px;top:199.00px;font-size:13px;line-height:15px;color:#222;letter-spacing:0.300px;">11</div>
<div class="t" style="left:656.45px;top:199.00px;font-size:13px;line-height:15px;color:#222;letter-spacing:0.300px;">12</div>
<div class="t" style="left:512.41px;top:219.00px;font-size:13px;line-height:15px;color:#222;letter-spacing:0.300px;">13</div>
<div class="t" style="left:537.82px;top:219.00px;font-size:13px;line-height:15px;color:#222;letter-spacing:0.300px;">14</div>
<div class="t" style="left:563.39px;top:219.00px;font-size:13px;line-height:15px;color:#222;letter-spacing:0.300px;">15</div>
<div class="t" style="left:588.41px;top:219.00px;font-size:13px;line-height:15px;color:#222;letter-spacing:0.300px;">16</div>
<div class="t" style="left:611.45px;top:219.00px;font-size:13px;line-height:15px;color:#222;letter-spacing:0.300px;">17</div>
<div class="t" style="left:633.41px;top:219.00px;font-size:13px;line-height:15px;color:#222;letter-spacing:0.300px;">18</div>
<div class="t" style="left:656.43px;top:219.00px;font-size:13px;line-height:15px;color:#222;letter-spacing:0.300px;">19</div>
<div class="t" style="left:512.54px;top:239.00px;font-size:13px;line-height:15px;color:#222;letter-spacing:0.300px;">20</div>
<div class="t" style="left:538.11px;top:239.00px;font-size:13px;line-height:15px;color:#222;letter-spacing:0.300px;">21</div>
<div class="t" style="left:563.62px;top:239.00px;font-size:13px;line-height:15px;color:#222;letter-spacing:0.300px;">22</div>
<div class="t" style="left:588.58px;top:239.00px;font-size:13px;line-height:15px;color:#222;letter-spacing:0.300px;">23</div>
<div class="t" style="left:611.49px;top:239.00px;font-size:13px;line-height:15px;color:#222;letter-spacing:0.300px;">24</div>
<div class="t" style="left:633.56px;top:239.00px;font-size:13px;line-height:15px;color:#222;letter-spacing:0.300px;">25</div>
<div class="t" style="left:656.58px;top:239.00px;font-size:13px;line-height:15px;color:#222;letter-spacing:0.300px;">26</div>
<div class="t" style="left:512.62px;top:259.00px;font-size:13px;line-height:15px;color:#222;letter-spacing:0.300px;">27</div>
<div class="t" style="left:538.08px;top:259.00px;font-size:13px;line-height:15px;color:#222;letter-spacing:0.300px;">28</div>
<div class="t" style="left:563.60px;top:259.00px;font-size:13px;line-height:15px;color:#222;letter-spacing:0.300px;">29</div>
<div class="t" style="left:588.62px;top:259.00px;font-size:13px;line-height:15px;color:#222;letter-spacing:0.300px;">30</div>
<div class="t" style="left:611.69px;top:259.00px;font-size:13px;line-height:15px;color:#222;letter-spacing:0.300px;">31</div>
<div class="t" style="left:637.77px;top:259.00px;font-size:13px;line-height:15px;color:#747474;letter-spacing:0.300px;font-style:italic;">1</div>
<div class="t" style="left:660.52px;top:259.00px;font-size:13px;line-height:15px;color:#747474;letter-spacing:0.300px;font-style:italic;">2</div>
<div class="t" style="left:516.29px;top:279.00px;font-size:13px;line-height:15px;color:#747474;letter-spacing:0.300px;font-style:italic;">3</div>
<div class="t" style="left:542.09px;top:279.00px;font-size:13px;line-height:15px;color:#747474;letter-spacing:0.300px;font-style:italic;">4</div>
<div class="t" style="left:567.22px;top:279.00px;font-size:13px;line-height:15px;color:#747474;letter-spacing:0.300px;font-style:italic;">5</div>
<div class="t" style="left:592.02px;top:279.00px;font-size:13px;line-height:15px;color:#747474;letter-spacing:0.300px;font-style:italic;">6</div>
<div class="t" style="left:614.51px;top:279.00px;font-size:13px;line-height:15px;color:#747474;letter-spacing:0.300px;font-style:italic;">7</div>
<div class="t" style="left:637.25px;top:279.00px;font-size:13px;line-height:15px;color:#747474;letter-spacing:0.300px;font-style:italic;">8</div>
<div class="t" style="left:660.29px;top:279.00px;font-size:13px;line-height:15px;color:#747474;letter-spacing:0.300px;font-style:italic;">9</div>
</section>
<main id="schedule">
<div class="t" style="left:197.12px;top:329.00px;font-size:12.5px;line-height:14px;color:#222;letter-spacing:-0.201px;">Table 1 (2)</div>
<div class="t" style="left:351.22px;top:329.00px;font-size:12.5px;line-height:14px;color:#222;letter-spacing:0.000px;transform:scaleX(1.029);transform-origin:0 0;">Table 2 (4)</div>
<div class="t" style="left:507.72px;top:329.00px;font-size:12.5px;line-height:14px;color:#222;letter-spacing:0.000px;transform:scaleX(1.024);transform-origin:0 0;">Table 3 (4)</div>
<div class="t" style="left:652.30px;top:329.00px;font-size:12.5px;line-height:14px;color:#222;letter-spacing:0.000px;transform:scaleX(1.093);transform-origin:0 0;">Treatment 5</div>
<div class="t" style="left:791.70px;top:329.00px;font-size:12.5px;line-height:14px;color:#222;letter-spacing:-0.000px;transform:scaleX(1.084);transform-origin:0 0;">Treatment room 1</div>
<div class="t" style="left:945.89px;top:329.00px;font-size:12.5px;line-height:14px;color:#222;letter-spacing:0.000px;transform:scaleX(1.113);transform-origin:0 0;">Treatment room 2</div>
<div class="t" style="left:1097.30px;top:329.00px;font-size:12.5px;line-height:14px;color:#222;letter-spacing:0.000px;transform:scaleX(1.102);transform-origin:0 0;">Treatment room 3</div>
<div class="tm" style="left:100px;top:342px;width:51px;height:24px"></div>
<div class="t" style="left:109.39px;top:347.00px;font-size:12.5px;line-height:14px;color:#111;letter-spacing:0.000px;font-weight:bold;-webkit-text-stroke:0.25px #111;transform:scaleX(1.046);transform-origin:0 0;">10:00</div>
<div class="cell" style="left:150px;top:342px;width:152px;height:24px"></div>
<div class="t" style="left:213.83px;top:346.00px;font-size:13.5px;line-height:15px;color:#888888;letter-spacing:-0.000px;font-style:italic;transform:scaleX(1.052);transform-origin:0 0;">free</div>
<div class="cell" style="left:301px;top:342px;width:162px;height:24px"></div>
<div class="t" style="left:364.83px;top:346.00px;font-size:13.5px;line-height:15px;color:#888888;letter-spacing:-0.000px;font-style:italic;transform:scaleX(1.052);transform-origin:0 0;">free</div>
<div class="cell" style="left:462px;top:342px;width:152px;height:24px"></div>
<div class="t" style="left:525.83px;top:346.00px;font-size:13.5px;line-height:15px;color:#888888;letter-spacing:-0.000px;font-style:italic;transform:scaleX(1.052);transform-origin:0 0;">free</div>
<div class="cell" style="left:613px;top:342px;width:152px;height:24px"></div>
<div class="t" style="left:676.83px;top:346.00px;font-size:13.5px;line-height:15px;color:#888888;letter-spacing:-0.000px;font-style:italic;transform:scaleX(1.052);transform-origin:0 0;">free</div>
<div class="cell" style="left:764px;top:342px;width:162px;height:24px"></div>
<div class="t" style="left:827.83px;top:346.00px;font-size:13.5px;line-height:15px;color:#888888;letter-spacing:-0.000px;font-style:italic;transform:scaleX(1.052);transform-origin:0 0;">free</div>
<div class="cell" style="left:925px;top:342px;width:152px;height:24px"></div>
<div class="t" style="left:988.83px;top:346.00px;font-size:13.5px;line-height:15px;color:#888888;letter-spacing:-0.000px;font-style:italic;transform:scaleX(1.052);transform-origin:0 0;">free</div>
<div class="cell cr" style="left:1076px;top:342px;width:152px;height:24px"></div>
<div class="t" style="left:1139.83px;top:346.00px;font-size:13.5px;line-height:15px;color:#888888;letter-spacing:-0.000px;font-style:italic;transform:scaleX(1.052);transform-origin:0 0;">free</div>
<div class="cell" style="left:1227px;top:342px;width:162px;height:24px"></div>
<div class="t" style="left:1290.83px;top:346.00px;font-size:13.5px;line-height:15px;color:#888888;letter-spacing:-0.000px;font-style:italic;transform:scaleX(1.052);transform-origin:0 0;">free</div>
<div class="tm" style="left:100px;top:365px;width:51px;height:24px"></div>
<div class="t" style="left:112.88px;top:370.00px;font-size:12.5px;line-height:14px;color:#111;letter-spacing:-0.550px;font-weight:bold;-webkit-text-stroke:0.25px #111;">10:15</div>
<div class="cell" style="left:150px;top:365px;width:152px;height:24px"></div>
<div class="t" style="left:213.83px;top:369.00px;font-size:13.5px;line-height:15px;color:#888888;letter-spacing:-0.000px;font-style:italic;transform:scaleX(1.052);transform-origin:0 0;">free</div>
<div class="cell" style="left:301px;top:365px;width:162px;height:24px"></div>
<div class="t" style="left:364.83px;top:369.00px;font-size:13.5px;line-height:15px;color:#888888;letter-spacing:-0.000px;font-style:italic;transform:scaleX(1.052);transform-origin:0 0;">free</div>
<div class="cell" style="left:462px;top:365px;width:152px;height:24px"></div>
<div class="t" style="left:525.83px;top:369.00px;font-size:13.5px;line-height:15px;color:#888888;letter-spacing:-0.000px;font-style:italic;transform:scaleX(1.052);transform-origin:0 0;">free</div>
<div class="cell" style="left:613px;top:365px;width:152px;height:24px"></div>
<div class="t" style="left:676.83px;top:369.00px;font-size:13.5px;line-height:15px;color:#888888;letter-spacing:-0.000px;font-style:italic;transform:scaleX(1.052);transform-origin:0 0;">free</div>
<div class="cell" style="left:764px;top:365px;width:162px;height:24px"></div>
<div class="t" style="left:827.83px;top:369.00px;font-size:13.5px;line-height:15px;color:#888888;letter-spacing:-0.000px;font-style:italic;transform:scaleX(1.052);transform-origin:0 0;">free</div>
<div class="cell" style="left:925px;top:365px;width:152px;height:24px"></div>
<div class="t" style="left:988.83px;top:369.00px;font-size:13.5px;line-height:15px;color:#888888;letter-spacing:-0.000px;font-style:italic;transform:scaleX(1.052);transform-origin:0 0;">free</div>
<div class="cell cr" style="left:1076px;top:365px;width:152px;height:24px"></div>
<div class="t" style="left:1139.83px;top:369.00px;font-size:13.5px;line-height:15px;color:#888888;letter-spacing:-0.000px;font-style:italic;transform:scaleX(1.052);transform-origin:0 0;">free</div>
<div class="cell" style="left:1227px;top:365px;width:162px;height:24px"></div>
<div class="t" style="left:1290.83px;top:369.00px;font-size:13.5px;line-height:15px;color:#888888;letter-spacing:-0.000px;font-style:italic;transform:scaleX(1.052);transform-origin:0 0;">free</div>
<div class="tm" style="left:100px;top:388px;width:51px;height:24px"></div>
<div class="t" style="left:110.31px;top:393.00px;font-size:12.5px;line-height:14px;color:#111;letter-spacing:-0.000px;font-weight:bold;-webkit-text-stroke:0.25px #111;transform:scaleX(1.017);transform-origin:0 0;">10:30</div>
<div class="cell cr" style="left:150px;top:388px;width:152px;height:24px"></div>
<div class="t" style="left:213.83px;top:392.00px;font-size:13.5px;line-height:15px;color:#888888;letter-spacing:-0.000px;font-style:italic;transform:scaleX(1.052);transform-origin:0 0;">free</div>
<div class="cell cr" style="left:301px;top:388px;width:162px;height:24px"></div>
<div class="t" style="left:364.83px;top:392.00px;font-size:13.5px;line-height:15px;color:#888888;letter-spacing:-0.000px;font-style:italic;transform:scaleX(1.052);transform-origin:0 0;">free</div>
<div class="cell cr" style="left:462px;top:388px;width:152px;height:24px"></div>
<div class="t" style="left:525.83px;top:392.00px;font-size:13.5px;line-height:15px;color:#888888;letter-spacing:-0.000px;font-style:italic;transform:scaleX(1.052);transform-origin:0 0;">free</div>
<div class="cell cr" style="left:613px;top:388px;width:152px;height:24px"></div>
<div class="t" style="left:676.83px;top:392.00px;font-size:13.5px;line-height:15px;color:#888888;letter-spacing:-0.000px;font-style:italic;transform:scaleX(1.052);transform-origin:0 0;">free</div>
<div class="cell cr" style="left:764px;top:388px;width:162px;height:24px"></div>
<div class="t" style="left:827.83px;top:392.00px;font-size:13.5px;line-height:15px;color:#888888;letter-spacing:-0.000px;font-style:italic;transform:scaleX(1.052);transform-origin:0 0;">free</div>
<div class="cell cr" style="left:925px;top:388px;width:152px;height:24px"></div>
<div class="t" style="left:988.83px;top:392.00px;font-size:13.5px;line-height:15px;color:#888888;letter-spacing:-0.000px;font-style:italic;transform:scaleX(1.052);transform-origin:0 0;">free</div>
<div class="cell" style="left:1076px;top:388px;width:152px;height:24px"></div>
<div class="t" style="left:1138.89px;top:392.00px;font-size:13.5px;line-height:15px;color:#111;letter-spacing:0.000px;font-weight:bold;font-style:italic;transform:scaleX(1.058);transform-origin:0 0;">free</div>
<div class="cell cr" style="left:1227px;top:388px;width:162px;height:24px"></div>
<div class="t" style="left:1290.83px;top:392.00px;font-size:13.5px;line-height:15px;color:#888888;letter-spacing:-0.000px;font-style:italic;transform:scaleX(1.052);transform-origin:0 0;">free</div>
<div class="tm" style="left:100px;top:411px;width:51px;height:24px"></div>
<div class="t" style="left:110.11px;top:416.00px;font-size:12.5px;line-height:14px;color:#111;letter-spacing:-0.000px;font-weight:bold;-webkit-text-stroke:0.25px #111;transform:scaleX(1.018);transform-origin:0 0;">10:45</div>
<div class="cell" style="left:150px;top:411px;width:152px;height:24px"></div>
<div class="t" style="left:213.83px;top:415.00px;font-size:13.5px;line-height:15px;color:#888888;letter-spacing:-0.000px;font-style:italic;transform:scaleX(1.052);transform-origin:0 0;">free</div>
<div class="cell" style="left:301px;top:411px;width:162px;height:24px"></div>
<div class="t" style="left:364.83px;top:415.00px;font-size:13.5px;line-height:15px;color:#888888;letter-spacing:-0.000px;font-style:italic;transform:scaleX(1.052);transform-origin:0 0;">free</div>
<div class="cell" style="left:462px;top:411px;width:152px;height:24px"></div>
<div class="t" style="left:525.83px;top:415.00px;font-size:13.5px;line-height:15px;color:#888888;letter-spacing:-0.000px;font-style:italic;transform:scaleX(1.052);transform-origin:0 0;">free</div>
<div class="cell" style="left:613px;top:411px;width:152px;height:24px"></div>
<div class="t" style="left:676.83px;top:415.00px;font-size:13.5px;line-height:15px;color:#888888;letter-spacing:-0.000px;font-style:italic;transform:scaleX(1.052);transform-origin:0 0;">free</div>
<div class="cell" style="left:764px;top:411px;width:162px;height:24px"></div>
<div class="t" style="left:827.83px;top:415.00px;font-size:13.5px;line-height:15px;color:#888888;letter-spacing:-0.000px;font-style:italic;transform:scaleX(1.052);transform-origin:0 0;">free</div>
<div class="cell" style="left:925px;top:411px;width:152px;height:24px"></div>
<div class="t" style="left:988.83px;top:415.00px;font-size:13.5px;line-height:15px;color:#888888;letter-spacing:-0.000px;font-style:italic;transform:scaleX(1.052);transform-origin:0 0;">free</div>
<div class="cell cr" style="left:1076px;top:411px;width:152px;height:24px"></div>
<div class="t" style="left:1139.83px;top:415.00px;font-size:13.5px;line-height:15px;color:#888888;letter-spacing:-0.000px;font-style:italic;transform:scaleX(1.052);transform-origin:0 0;">free</div>
<div class="cell" style="left:1227px;top:411px;width:162px;height:24px"></div>
<div class="t" style="left:1290.83px;top:415.00px;font-size:13.5px;line-height:15px;color:#888888;letter-spacing:-0.000px;font-style:italic;transform:scaleX(1.052);transform-origin:0 0;">free</div>
<div class="tm" style="left:100px;top:434px;width:51px;height:24px"></div>
<div class="t" style="left:113.73px;top:439.00px;font-size:12.5px;line-height:14px;color:#111;letter-spacing:-0.550px;font-weight:bold;-webkit-text-stroke:0.25px #111;">11:00</div>
<div class="cell" style="left:150px;top:434px;width:152px;height:24px"></div>
<div class="t" style="left:213.83px;top:438.00px;font-size:13.5px;line-height:15px;color:#888888;letter-spacing:-0.000px;font-style:italic;transform:scaleX(1.052);transform-origin:0 0;">free</div>
<div class="cell" style="left:301px;top:434px;width:162px;height:139px"></div>
<div class="doe" style="left:307px;top:494px"></div>
<div class="t" style="left:368.60px;top:496.00px;font-size:13px;line-height:15px;color:#111;letter-spacing:0.000px;font-weight:bold;transform:scaleX(1.053);transform-origin:0 0;">Doe</div>
<div class="cell" style="left:462px;top:434px;width:152px;height:24px"></div>
<div class="t" style="left:525.83px;top:438.00px;font-size:13.5px;line-height:15px;color:#888888;letter-spacing:-0.000px;font-style:italic;transform:scaleX(1.052);transform-origin:0 0;">free</div>
<div class="cell" style="left:613px;top:434px;width:152px;height:24px"></div>
<div class="t" style="left:676.83px;top:438.00px;font-size:13.5px;line-height:15px;color:#888888;letter-spacing:-0.000px;font-style:italic;transform:scaleX(1.052);transform-origin:0 0;">free</div>
<div class="cell" style="left:764px;top:434px;width:162px;height:24px"></div>
<div class="t" style="left:827.83px;top:438.00px;font-size:13.5px;line-height:15px;color:#888888;letter-spacing:-0.000px;font-style:italic;transform:scaleX(1.052);transform-origin:0 0;">free</div>
<div class="cell" style="left:925px;top:434px;width:152px;height:24px"></div>
<div class="t" style="left:988.83px;top:438.00px;font-size:13.5px;line-height:15px;color:#888888;letter-spacing:-0.000px;font-style:italic;transform:scaleX(1.052);transform-origin:0 0;">free</div>
<div class="cell cr" style="left:1076px;top:434px;width:152px;height:24px"></div>
<div class="t" style="left:1139.83px;top:438.00px;font-size:13.5px;line-height:15px;color:#888888;letter-spacing:-0.000px;font-style:italic;transform:scaleX(1.052);transform-origin:0 0;">free</div>
<div class="cell" style="left:1227px;top:434px;width:162px;height:185px"></div>
<div class="doe" style="left:1233px;top:517px"></div>
<div class="t" style="left:1294.60px;top:519.00px;font-size:13px;line-height:15px;color:#111;letter-spacing:0.000px;font-weight:bold;transform:scaleX(1.053);transform-origin:0 0;">Doe</div>
<div class="tm" style="left:100px;top:457px;width:51px;height:24px"></div>
<div class="t" style="left:113.56px;top:462.00px;font-size:12.5px;line-height:14px;color:#111;letter-spacing:-0.550px;font-weight:bold;-webkit-text-stroke:0.25px #111;">11:15</div>
<div class="cell" style="left:150px;top:457px;width:152px;height:24px"></div>
<div class="t" style="left:213.83px;top:461.00px;font-size:13.5px;line-height:15px;color:#888888;letter-spacing:-0.000px;font-style:italic;transform:scaleX(1.052);transform-origin:0 0;">free</div>
<div class="cell" style="left:462px;top:457px;width:152px;height:24px"></div>
<div class="t" style="left:525.83px;top:461.00px;font-size:13.5px;line-height:15px;color:#888888;letter-spacing:-0.000px;font-style:italic;transform:scaleX(1.052);transform-origin:0 0;">free</div>
<div class="cell" style="left:613px;top:457px;width:152px;height:24px"></div>
<div class="t" style="left:676.83px;top:461.00px;font-size:13.5px;line-height:15px;color:#888888;letter-spacing:-0.000px;font-style:italic;transform:scaleX(1.052);transform-origin:0 0;">free</div>
<div class="cell" style="left:764px;top:457px;width:162px;height:24px"></div>
<div class="t" style="left:827.83px;top:461.00px;font-size:13.5px;line-height:15px;color:#888888;letter-spacing:-0.000px;font-style:italic;transform:scaleX(1.052);transform-origin:0 0;">free</div>
<div class="cell" style="left:925px;top:457px;width:152px;height:24px"></div>
<div class="t" style="left:988.83px;top:461.00px;font-size:13.5px;line-height:15px;color:#888888;letter-spacing:-0.000px;font-style:italic;transform:scaleX(1.052);transform-origin:0 0;">free</div>
<div class="cell cr" style="left:1076px;top:457px;width:152px;height:24px"></div>
<div class="t" style="left:1139.83px;top:461.00px;font-size:13.5px;line-height:15px;color:#888888;letter-spacing:-0.000px;font-style:italic;transform:scaleX(1.052);transform-origin:0 0;">free</div>
<div class="tm" style="left:100px;top:480px;width:51px;height:24px"></div>
<div class="t" style="left:113.73px;top:485.00px;font-size:12.5px;line-height:14px;color:#111;letter-spacing:-0.550px;font-weight:bold;-webkit-text-stroke:0.25px #111;">11:30</div>
<div class="cell" style="left:150px;top:480px;width:152px;height:24px"></div>
<div class="t" style="left:213.83px;top:484.00px;font-size:13.5px;line-height:15px;color:#888888;letter-spacing:-0.000px;font-style:italic;transform:scaleX(1.052);transform-origin:0 0;">free</div>
<div class="cell" style="left:462px;top:480px;width:152px;height:24px"></div>
<div class="t" style="left:525.83px;top:484.00px;font-size:13.5px;line-height:15px;color:#888888;letter-spacing:-0.000px;font-style:italic;transform:scaleX(1.052);transform-origin:0 0;">free</div>
<div class="cell" style="left:613px;top:480px;width:152px;height:24px"></div>
<div class="t" style="left:676.83px;top:484.00px;font-size:13.5px;line-height:15px;color:#888888;letter-spacing:-0.000px;font-style:italic;transform:scaleX(1.052);transform-origin:0 0;">free</div>
<div class="cell" style="left:764px;top:480px;width:162px;height:93px"></div>
<div class="doe" style="left:770px;top:517px"></div>
<div class="t" style="left:831.60px;top:519.00px;font-size:13px;line-height:15px;color:#111;letter-spacing:0.000px;font-weight:bold;transform:scaleX(1.053);transform-origin:0 0;">Doe</div>
<div class="cell" style="left:925px;top:480px;width:152px;height:24px"></div>
<div class="t" style="left:988.83px;top:484.00px;font-size:13.5px;line-height:15px;color:#888888;letter-spacing:-0.000px;font-style:italic;transform:scaleX(1.052);transform-origin:0 0;">free</div>
<div class="cell cr" style="left:1076px;top:480px;width:152px;height:24px"></div>
<div class="t" style="left:1139.83px;top:484.00px;font-size:13.5px;line-height:15px;color:#888888;letter-spacing:-0.000px;font-style:italic;transform:scaleX(1.052);transform-origin:0 0;">free</div>
<div class="tm" style="left:100px;top:503px;width:51px;height:24px"></div>
<div class="t" style="left:113.56px;top:508.00px;font-size:12.5px;line-height:14px;color:#111;letter-spacing:-0.550px;font-weight:bold;-webkit-text-stroke:0.25px #111;">11:45</div>
<div class="cell" style="left:150px;top:503px;width:152px;height:24px"></div>
<div class="t" style="left:213.83px;top:507.00px;font-size:13.5px;line-height:15px;color:#888888;letter-spacing:-0.000px;font-style:italic;transform:scaleX(1.052);transform-origin:0 0;">free</div>
<div class="cell" style="left:462px;top:503px;width:152px;height:24px"></div>
<div class="t" style="left:525.83px;top:507.00px;font-size:13.5px;line-height:15px;color:#888888;letter-spacing:-0.000px;font-style:italic;transform:scaleX(1.052);transform-origin:0 0;">free</div>
<div class="cell" style="left:613px;top:503px;width:152px;height:24px"></div>
<div class="t" style="left:676.83px;top:507.00px;font-size:13.5px;line-height:15px;color:#888888;letter-spacing:-0.000px;font-style:italic;transform:scaleX(1.052);transform-origin:0 0;">free</div>
<div class="cell" style="left:925px;top:503px;width:152px;height:24px"></div>
<div class="t" style="left:988.83px;top:507.00px;font-size:13.5px;line-height:15px;color:#888888;letter-spacing:-0.000px;font-style:italic;transform:scaleX(1.052);transform-origin:0 0;">free</div>
<div class="cell cr" style="left:1076px;top:503px;width:152px;height:24px"></div>
<div class="t" style="left:1139.83px;top:507.00px;font-size:13.5px;line-height:15px;color:#888888;letter-spacing:-0.000px;font-style:italic;transform:scaleX(1.052);transform-origin:0 0;">free</div>
<div class="tm" style="left:100px;top:526px;width:51px;height:24px"></div>
<div class="t" style="left:111.03px;top:531.00px;font-size:12.5px;line-height:14px;color:#111;letter-spacing:-0.047px;font-weight:bold;-webkit-text-stroke:0.25px #111;">12:00</div>
<div class="cell" style="left:150px;top:526px;width:152px;height:24px"></div>
<div class="t" style="left:213.83px;top:530.00px;font-size:13.5px;line-height:15px;color:#888888;letter-spacing:-0.000px;font-style:italic;transform:scaleX(1.052);transform-origin:0 0;">free</div>
<div class="cell" style="left:462px;top:526px;width:152px;height:24px"></div>
<div class="t" style="left:525.83px;top:530.00px;font-size:13.5px;line-height:15px;color:#888888;letter-spacing:-0.000px;font-style:italic;transform:scaleX(1.052);transform-origin:0 0;">free</div>
<div class="cell" style="left:613px;top:526px;width:152px;height:24px"></div>
<div class="t" style="left:676.83px;top:530.00px;font-size:13.5px;line-height:15px;color:#888888;letter-spacing:-0.000px;font-style:italic;transform:scaleX(1.052);transform-origin:0 0;">free</div>
<div class="cell" style="left:925px;top:526px;width:152px;height:24px"></div>
<div class="t" style="left:988.83px;top:530.00px;font-size:13.5px;line-height:15px;color:#888888;letter-spacing:-0.000px;font-style:italic;transform:scaleX(1.052);transform-origin:0 0;">free</div>
<div class="cell cr" style="left:1076px;top:526px;width:152px;height:24px"></div>
<div class="t" style="left:1139.83px;top:530.00px;font-size:13.5px;line-height:15px;color:#888888;letter-spacing:-0.000px;font-style:italic;transform:scaleX(1.052);transform-origin:0 0;">free</div>
<div class="tm" style="left:100px;top:549px;width:51px;height:24px"></div>
<div class="t" style="left:112.88px;top:554.00px;font-size:12.5px;line-height:14px;color:#111;letter-spacing:-0.550px;font-weight:bold;-webkit-text-stroke:0.25px #111;">12:15</div>
<div class="cell" style="left:150px;top:549px;width:152px;height:24px"></div>
<div class="t" style="left:213.83px;top:553.00px;font-size:13.5px;line-height:15px;color:#888888;letter-spacing:-0.000px;font-style:italic;transform:scaleX(1.052);transform-origin:0 0;">free</div>
<div class="cell" style="left:462px;top:549px;width:152px;height:24px"></div>
<div class="t" style="left:525.83px;top:553.00px;font-size:13.5px;line-height:15px;color:#888888;letter-spacing:-0.000px;font-style:italic;transform:scaleX(1.052);transform-origin:0 0;">free</div>
<div class="cell" style="left:613px;top:549px;width:152px;height:24px"></div>
<div class="t" style="left:676.83px;top:553.00px;font-size:13.5px;line-height:15px;color:#888888;letter-spacing:-0.000px;font-style:italic;transform:scaleX(1.052);transform-origin:0 0;">free</div>
<div class="cell" style="left:925px;top:549px;width:152px;height:24px"></div>
<div class="t" style="left:988.83px;top:553.00px;font-size:13.5px;line-height:15px;color:#888888;letter-spacing:-0.000px;font-style:italic;transform:scaleX(1.052);transform-origin:0 0;">free</div>
<div class="cell cr" style="left:1076px;top:549px;width:152px;height:24px"></div>
<div class="t" style="left:1139.83px;top:553.00px;font-size:13.5px;line-height:15px;color:#888888;letter-spacing:-0.000px;font-style:italic;transform:scaleX(1.052);transform-origin:0 0;">free</div>
<div class="tm" style="left:100px;top:572px;width:51px;height:24px"></div>
<div class="t" style="left:111.93px;top:577.00px;font-size:12.5px;line-height:14px;color:#111;letter-spacing:-0.272px;font-weight:bold;-webkit-text-stroke:0.25px #111;">12:30</div>
<div class="cell" style="left:150px;top:572px;width:152px;height:24px"></div>
<div class="t" style="left:213.83px;top:576.00px;font-size:13.5px;line-height:15px;color:#888888;letter-spacing:-0.000px;font-style:italic;transform:scaleX(1.052);transform-origin:0 0;">free</div>
<div class="cell" style="left:301px;top:572px;width:162px;height:24px"></div>
<div class="t" style="left:364.83px;top:576.00px;font-size:13.5px;line-height:15px;color:#888888;letter-spacing:-0.000px;font-style:italic;transform:scaleX(1.052);transform-origin:0 0;">free</div>
<div class="cell" style="left:462px;top:572px;width:152px;height:24px"></div>
<div class="t" style="left:525.83px;top:576.00px;font-size:13.5px;line-height:15px;color:#888888;letter-spacing:-0.000px;font-style:italic;transform:scaleX(1.052);transform-origin:0 0;">free</div>
<div class="cell" style="left:613px;top:572px;width:152px;height:24px"></div>
<div class="t" style="left:676.83px;top:576.00px;font-size:13.5px;line-height:15px;color:#888888;letter-spacing:-0.000px;font-style:italic;transform:scaleX(1.052);transform-origin:0 0;">free</div>
<div class="cell" style="left:764px;top:572px;width:162px;height:24px"></div>
<div class="t" style="left:827.83px;top:576.00px;font-size:13.5px;line-height:15px;color:#888888;letter-spacing:-0.000px;font-style:italic;transform:scaleX(1.052);transform-origin:0 0;">free</div>
<div class="cell" style="left:925px;top:572px;width:152px;height:24px"></div>
<div class="t" style="left:988.83px;top:576.00px;font-size:13.5px;line-height:15px;color:#888888;letter-spacing:-0.000px;font-style:italic;transform:scaleX(1.052);transform-origin:0 0;">free</div>
<div class="cell cr" style="left:1076px;top:572px;width:152px;height:24px"></div>
<div class="t" style="left:1139.83px;top:576.00px;font-size:13.5px;line-height:15px;color:#888888;letter-spacing:-0.000px;font-style:italic;transform:scaleX(1.052);transform-origin:0 0;">free</div>
<div class="tm" style="left:100px;top:595px;width:51px;height:24px"></div>
<div class="t" style="left:111.73px;top:600.00px;font-size:12.5px;line-height:14px;color:#111;letter-spacing:-0.263px;font-weight:bold;-webkit-text-stroke:0.25px #111;">12:45</div>
<div class="cell" style="left:150px;top:595px;width:152px;height:24px"></div>
<div class="t" style="left:213.83px;top:599.00px;font-size:13.5px;line-height:15px;color:#888888;letter-spacing:-0.000px;font-style:italic;transform:scaleX(1.052);transform-origin:0 0;">free</div>
<div class="cell" style="left:301px;top:595px;width:162px;height:24px"></div>
<div class="t" style="left:364.83px;top:599.00px;font-size:13.5px;line-height:15px;color:#888888;letter-spacing:-0.000px;font-style:italic;transform:scaleX(1.052);transform-origin:0 0;">free</div>
<div class="cell" style="left:462px;top:595px;width:152px;height:24px"></div>
<div class="t" style="left:525.83px;top:599.00px;font-size:13.5px;line-height:15px;color:#888888;letter-spacing:-0.000px;font-style:italic;transform:scaleX(1.052);transform-origin:0 0;">free</div>
<div class="cell" style="left:613px;top:595px;width:152px;height:24px"></div>
<div class="t" style="left:676.83px;top:599.00px;font-size:13.5px;line-height:15px;color:#888888;letter-spacing:-0.000px;font-style:italic;transform:scaleX(1.052);transform-origin:0 0;">free</div>
<div class="cell" style="left:764px;top:595px;width:162px;height:24px"></div>
<div class="t" style="left:827.83px;top:599.00px;font-size:13.5px;line-height:15px;color:#888888;letter-spacing:-0.000px;font-style:italic;transform:scaleX(1.052);transform-origin:0 0;">free</div>
<div class="cell" style="left:925px;top:595px;width:152px;height:24px"></div>
<div class="t" style="left:988.83px;top:599.00px;font-size:13.5px;line-height:15px;color:#888888;letter-spacing:-0.000px;font-style:italic;transform:scaleX(1.052);transform-origin:0 0;">free</div>
<div class="cell cr" style="left:1076px;top:595px;width:152px;height:24px"></div>
<div class="t" style="left:1139.83px;top:599.00px;font-size:13.5px;line-height:15px;color:#888888;letter-spacing:-0.000px;font-style:italic;transform:scaleX(1.052);transform-origin:0 0;">free</div>
<div class="tm" style="left:100px;top:618px;width:51px;height:24px"></div>
<div class="t" style="left:110.31px;top:623.00px;font-size:12.5px;line-height:14px;color:#111;letter-spacing:-0.000px;font-weight:bold;-webkit-text-stroke:0.25px #111;transform:scaleX(1.017);transform-origin:0 0;">13:00</div>
<div class="cell" style="left:150px;top:618px;width:152px;height:24px"></div>
<div class="t" style="left:213.83px;top:622.00px;font-size:13.5px;line-height:15px;color:#888888;letter-spacing:-0.000px;font-style:italic;transform:scaleX(1.052);transform-origin:0 0;">free</div>
<div class="cell" style="left:301px;top:618px;width:162px;height:24px"></div>
<div class="t" style="left:364.83px;top:622.00px;font-size:13.5px;line-height:15px;color:#888888;letter-spacing:-0.000px;font-style:italic;transform:scaleX(1.052);transform-origin:0 0;">free</div>
<div class="cell" style="left:462px;top:618px;width:152px;height:24px"></div>
<div class="t" style="left:525.83px;top:622.00px;font-size:13.5px;line-height:15px;color:#888888;letter-spacing:-0.000px;font-style:italic;transform:scaleX(1.052);transform-origin:0 0;">free</div>
<div class="cell" style="left:613px;top:618px;width:152px;height:24px"></div>
<div class="t" style="left:676.83px;top:622.00px;font-size:13.5px;line-height:15px;color:#888888;letter-spacing:-0.000px;font-style:italic;transform:scaleX(1.052);transform-origin:0 0;">free</div>
<div class="cell" style="left:764px;top:618px;width:162px;height:24px"></div>
<div class="t" style="left:827.83px;top:622.00px;font-size:13.5px;line-height:15px;color:#888888;letter-spacing:-0.000px;font-style:italic;transform:scaleX(1.052);transform-origin:0 0;">free</div>
<div class="cell" style="left:925px;top:618px;width:152px;height:24px"></div>
<div class="t" style="left:988.83px;top:622.00px;font-size:13.5px;line-height:15px;color:#888888;letter-spacing:-0.000px;font-style:italic;transform:scaleX(1.052);transform-origin:0 0;">free</div>
<div class="cell cr" style="left:1076px;top:618px;width:152px;height:24px"></div>
<div class="t" style="left:1139.83px;top:622.00px;font-size:13.5px;line-height:15px;color:#888888;letter-spacing:-0.000px;font-style:italic;transform:scaleX(1.052);transform-origin:0 0;">free</div>
<div class="cell" style="left:1227px;top:618px;width:162px;height:24px"></div>
<div class="t" style="left:1290.83px;top:622.00px;font-size:13.5px;line-height:15px;color:#888888;letter-spacing:-0.000px;font-style:italic;transform:scaleX(1.052);transform-origin:0 0;">free</div>
<div class="tm" style="left:100px;top:641px;width:51px;height:24px"></div>
<div class="t" style="left:112.88px;top:646.00px;font-size:12.5px;line-height:14px;color:#111;letter-spacing:-0.550px;font-weight:bold;-webkit-text-stroke:0.25px #111;">13:15</div>
<div class="cell" style="left:150px;top:641px;width:152px;height:24px"></div>
<div class="t" style="left:213.83px;top:645.00px;font-size:13.5px;line-height:15px;color:#888888;letter-spacing:-0.000px;font-style:italic;transform:scaleX(1.052);transform-origin:0 0;">free</div>
<div class="cell" style="left:301px;top:641px;width:162px;height:24px"></div>
<div class="t" style="left:364.83px;top:645.00px;font-size:13.5px;line-height:15px;color:#888888;letter-spacing:-0.000px;font-style:italic;transform:scaleX(1.052);transform-origin:0 0;">free</div>
<div class="cell" style="left:462px;top:641px;width:152px;height:24px"></div>
<div class="t" style="left:525.83px;top:645.00px;font-size:13.5px;line-height:15px;color:#888888;letter-spacing:-0.000px;font-style:italic;transform:scaleX(1.052);transform-origin:0 0;">free</div>
<div class="cell" style="left:613px;top:641px;width:152px;height:24px"></div>
<div class="t" style="left:676.83px;top:645.00px;font-size:13.5px;line-height:15px;color:#888888;letter-spacing:-0.000px;font-style:italic;transform:scaleX(1.052);transform-origin:0 0;">free</div>
<div class="cell" style="left:764px;top:641px;width:162px;height:24px"></div>
<div class="t" style="left:827.83px;top:645.00px;font-size:13.5px;line-height:15px;color:#888888;letter-spacing:-0.000px;font-style:italic;transform:scaleX(1.052);transform-origin:0 0;">free</div>
<div class="cell" style="left:925px;top:641px;width:152px;height:24px"></div>
<div class="t" style="left:988.83px;top:645.00px;font-size:13.5px;line-height:15px;color:#888888;letter-spacing:-0.000px;font-style:italic;transform:scaleX(1.052);transform-origin:0 0;">free</div>
<div class="cell cr" style="left:1076px;top:641px;width:152px;height:24px"></div>
<div class="t" style="left:1139.83px;top:645.00px;font-size:13.5px;line-height:15px;color:#888888;letter-spacing:-0.000px;font-style:italic;transform:scaleX(1.052);transform-origin:0 0;">free</div>
<div class="cell" style="left:1227px;top:641px;width:162px;height:24px"></div>
<div class="t" style="left:1290.83px;top:645.00px;font-size:13.5px;line-height:15px;color:#888888;letter-spacing:-0.000px;font-style:italic;transform:scaleX(1.052);transform-origin:0 0;">free</div>
<div class="tm" style="left:100px;top:664px;width:51px;height:24px"></div>
<div class="t" style="left:111.23px;top:669.00px;font-size:12.5px;line-height:14px;color:#111;letter-spacing:-0.097px;font-weight:bold;-webkit-text-stroke:0.25px #111;">13:30</div>
<div class="cell" style="left:150px;top:664px;width:152px;height:24px"></div>
<div class="t" style="left:213.83px;top:668.00px;font-size:13.5px;line-height:15px;color:#888888;letter-spacing:-0.000px;font-style:italic;transform:scaleX(1.052);transform-origin:0 0;">free</div>
<div class="cell" style="left:301px;top:664px;width:162px;height:24px"></div>
<div class="t" style="left:364.83px;top:668.00px;font-size:13.5px;line-height:15px;color:#888888;letter-spacing:-0.000px;font-style:italic;transform:scaleX(1.052);transform-origin:0 0;">free</div>
<div class="cell" style="left:462px;top:664px;width:152px;height:24px"></div>
<div class="t" style="left:525.83px;top:668.00px;font-size:13.5px;line-height:15px;color:#888888;letter-spacing:-0.000px;font-style:italic;transform:scaleX(1.052);transform-origin:0 0;">free</div>
<div class="cell" style="left:613px;top:664px;width:152px;height:24px"></div>
<div class="t" style="left:676.83px;top:668.00px;font-size:13.5px;line-height:15px;color:#888888;letter-spacing:-0.000px;font-style:italic;transform:scaleX(1.052);transform-origin:0 0;">free</div>
<div class="cell" style="left:764px;top:664px;width:162px;height:24px"></div>
<div class="t" style="left:827.83px;top:668.00px;font-size:13.5px;line-height:15px;color:#888888;letter-spacing:-0.000px;font-style:italic;transform:scaleX(1.052);transform-origin:0 0;">free</div>
<div class="cell" style="left:925px;top:664px;width:152px;height:24px"></div>
<div class="t" style="left:988.83px;top:668.00px;font-size:13.5px;line-height:15px;color:#888888;letter-spacing:-0.000px;font-style:italic;transform:scaleX(1.052);transform-origin:0 0;">free</div>
<div class="cell cr" style="left:1076px;top:664px;width:152px;height:24px"></div>
<div class="t" style="left:1139.83px;top:668.00px;font-size:13.5px;line-height:15px;color:#888888;letter-spacing:-0.000px;font-style:italic;transform:scaleX(1.052);transform-origin:0 0;">free</div>
<div class="cell" style="left:1227px;top:664px;width:162px;height:24px"></div>
<div class="t" style="left:1290.83px;top:668.00px;font-size:13.5px;line-height:15px;color:#888888;letter-spacing:-0.000px;font-style:italic;transform:scaleX(1.052);transform-origin:0 0;">free</div>
<div class="tm" style="left:100px;top:687px;width:51px;height:24px"></div>
<div class="t" style="left:111.03px;top:692.00px;font-size:12.5px;line-height:14px;color:#111;letter-spacing:-0.088px;font-weight:bold;-webkit-text-stroke:0.25px #111;">13:45</div>
<div class="cell" style="left:150px;top:687px;width:152px;height:24px"></div>
<div class="t" style="left:213.83px;top:691.00px;font-size:13.5px;line-height:15px;color:#888888;letter-spacing:-0.000px;font-style:italic;transform:scaleX(1.052);transform-origin:0 0;">free</div>
<div class="cell" style="left:301px;top:687px;width:162px;height:24px"></div>
<div class="t" style="left:364.83px;top:691.00px;font-size:13.5px;line-height:15px;color:#888888;letter-spacing:-0.000px;font-style:italic;transform:scaleX(1.052);transform-origin:0 0;">free</div>
<div class="cell" style="left:462px;top:687px;width:152px;height:24px"></div>
<div class="t" style="left:525.83px;top:691.00px;font-size:13.5px;line-height:15px;color:#888888;letter-spacing:-0.000px;font-style:italic;transform:scaleX(1.052);transform-origin:0 0;">free</div>
<div class="cell" style="left:613px;top:687px;width:152px;height:24px"></div>
<div class="t" style="left:676.83px;top:691.00px;font-size:13.5px;line-height:15px;color:#888888;letter-spacing:-0.000px;font-style:italic;transform:scaleX(1.052);transform-origin:0 0;">free</div>
<div class="cell" style="left:764px;top:687px;width:162px;height:24px"></div>
<div class="t" style="left:827.83px;top:691.00px;font-size:13.5px;line-height:15px;color:#888888;letter-spacing:-0.000px;font-style:italic;transform:scaleX(1.052);transform-origin:0 0;">free</div>
<div class="cell" style="left:925px;top:687px;width:152px;height:24px"></div>
<div class="t" style="left:988.83px;top:691.00px;font-size:13.5px;line-height:15px;color:#888888;letter-spacing:-0.000px;font-style:italic;transform:scaleX(1.052);transform-origin:0 0;">free</div>
<div class="cell cr" style="left:1076px;top:687px;width:152px;height:24px"></div>
<div class="t" style="left:1139.83px;top:691.00px;font-size:13.5px;line-height:15px;color:#888888;letter-spacing:-0.000px;font-style:italic;transform:scaleX(1.052);transform-origin:0 0;">free</div>
<div class="cell" style="left:1227px;top:687px;width:162px;height:24px"></div>
<div class="t" style="left:1290.83px;top:691.00px;font-size:13.5px;line-height:15px;color:#888888;letter-spacing:-0.000px;font-style:italic;transform:scaleX(1.052);transform-origin:0 0;">free</div>
<div class="tm" style="left:100px;top:710px;width:51px;height:24px"></div>
<div class="t" style="left:110.00px;top:715.00px;font-size:12.5px;line-height:14px;color:#111;letter-spacing:-0.000px;font-weight:bold;-webkit-text-stroke:0.25px #111;transform:scaleX(1.026);transform-origin:0 0;">14:00</div>
<div class="cell" style="left:150px;top:710px;width:152px;height:24px"></div>
<div class="t" style="left:213.83px;top:714.00px;font-size:13.5px;line-height:15px;color:#888888;letter-spacing:-0.000px;font-style:italic;transform:scaleX(1.052);transform-origin:0 0;">free</div>
<div class="cell" style="left:301px;top:710px;width:162px;height:24px"></div>
<div class="t" style="left:364.83px;top:714.00px;font-size:13.5px;line-height:15px;color:#888888;letter-spacing:-0.000px;font-style:italic;transform:scaleX(1.052);transform-origin:0 0;">free</div>
<div class="cell" style="left:462px;top:710px;width:152px;height:24px"></div>
<div class="t" style="left:525.83px;top:714.00px;font-size:13.5px;line-height:15px;color:#888888;letter-spacing:-0.000px;font-style:italic;transform:scaleX(1.052);transform-origin:0 0;">free</div>
<div class="cell" style="left:613px;top:710px;width:152px;height:24px"></div>
<div class="t" style="left:676.83px;top:714.00px;font-size:13.5px;line-height:15px;color:#888888;letter-spacing:-0.000px;font-style:italic;transform:scaleX(1.052);transform-origin:0 0;">free</div>
<div class="cell" style="left:764px;top:710px;width:162px;height:24px"></div>
<div class="t" style="left:827.83px;top:714.00px;font-size:13.5px;line-height:15px;color:#888888;letter-spacing:-0.000px;font-style:italic;transform:scaleX(1.052);transform-origin:0 0;">free</div>
<div class="cell" style="left:925px;top:710px;width:152px;height:24px"></div>
<div class="t" style="left:988.83px;top:714.00px;font-size:13.5px;line-height:15px;color:#888888;letter-spacing:-0.000px;font-style:italic;transform:scaleX(1.052);transform-origin:0 0;">free</div>
<div class="cell cr" style="left:1076px;top:710px;width:152px;height:24px"></div>
<div class="t" style="left:1139.83px;top:714.00px;font-size:13.5px;line-height:15px;color:#888888;letter-spacing:-0.000px;font-style:italic;transform:scaleX(1.052);transform-origin:0 0;">free</div>
<div class="cell" style="left:1227px;top:710px;width:162px;height:24px"></div>
<div class="t" style="left:1290.83px;top:714.00px;font-size:13.5px;line-height:15px;color:#888888;letter-spacing:-0.000px;font-style:italic;transform:scaleX(1.052);transform-origin:0 0;">free</div>
<div class="tm" style="left:100px;top:733px;width:51px;height:24px"></div>
<div class="t" style="left:112.88px;top:738.00px;font-size:12.5px;line-height:14px;color:#111;letter-spacing:-0.550px;font-weight:bold;-webkit-text-stroke:0.25px #111;">14:15</div>
<div class="cell" style="left:150px;top:733px;width:152px;height:24px"></div>
<div class="t" style="left:213.83px;top:737.00px;font-size:13.5px;line-height:15px;color:#888888;letter-spacing:-0.000px;font-style:italic;transform:scaleX(1.052);transform-origin:0 0;">free</div>
<div class="cell" style="left:301px;top:733px;width:162px;height:24px"></div>
<div class="t" style="left:364.83px;top:737.00px;font-size:13.5px;line-height:15px;color:#888888;letter-spacing:-0.000px;font-style:italic;transform:scaleX(1.052);transform-origin:0 0;">free</div>
<div class="cell" style="left:462px;top:733px;width:152px;height:24px"></div>
<div class="t" style="left:525.83px;top:737.00px;font-size:13.5px;line-height:15px;color:#888888;letter-spacing:-0.000px;font-style:italic;transform:scaleX(1.052);transform-origin:0 0;">free</div>
<div class="cell" style="left:613px;top:733px;width:152px;height:24px"></div>
<div class="t" style="left:676.83px;top:737.00px;font-size:13.5px;line-height:15px;color:#888888;letter-spacing:-0.000px;font-style:italic;transform:scaleX(1.052);transform-origin:0 0;">free</div>
<div class="cell" style="left:764px;top:733px;width:162px;height:24px"></div>
<div class="t" style="left:827.83px;top:737.00px;font-size:13.5px;line-height:15px;color:#888888;letter-spacing:-0.000px;font-style:italic;transform:scaleX(1.052);transform-origin:0 0;">free</div>
<div class="cell" style="left:925px;top:733px;width:152px;height:24px"></div>
<div class="t" style="left:988.83px;top:737.00px;font-size:13.5px;line-height:15px;color:#888888;letter-spacing:-0.000px;font-style:italic;transform:scaleX(1.052);transform-origin:0 0;">free</div>
<div class="cell cr" style="left:1076px;top:733px;width:152px;height:24px"></div>
<div class="t" style="left:1139.83px;top:737.00px;font-size:13.5px;line-height:15px;color:#888888;letter-spacing:-0.000px;font-style:italic;transform:scaleX(1.052);transform-origin:0 0;">free</div>
<div class="cell" style="left:1227px;top:733px;width:162px;height:24px"></div>
<div class="t" style="left:1290.83px;top:737.00px;font-size:13.5px;line-height:15px;color:#888888;letter-spacing:-0.000px;font-style:italic;transform:scaleX(1.052);transform-origin:0 0;">free</div>
<div class="tm" style="left:100px;top:756px;width:51px;height:24px"></div>
<div class="t" style="left:110.93px;top:761.00px;font-size:12.5px;line-height:14px;color:#111;letter-spacing:-0.022px;font-weight:bold;-webkit-text-stroke:0.25px #111;">14:30</div>
<div class="cell" style="left:150px;top:756px;width:152px;height:24px"></div>
<div class="t" style="left:213.83px;top:760.00px;font-size:13.5px;line-height:15px;color:#888888;letter-spacing:-0.000px;font-style:italic;transform:scaleX(1.052);transform-origin:0 0;">free</div>
<div class="cell" style="left:301px;top:756px;width:162px;height:24px"></div>
<div class="t" style="left:364.83px;top:760.00px;font-size:13.5px;line-height:15px;color:#888888;letter-spacing:-0.000px;font-style:italic;transform:scaleX(1.052);transform-origin:0 0;">free</div>
<div class="cell" style="left:462px;top:756px;width:152px;height:24px"></div>
<div class="t" style="left:525.83px;top:760.00px;font-size:13.5px;line-height:15px;color:#888888;letter-spacing:-0.000px;font-style:italic;transform:scaleX(1.052);transform-origin:0 0;">free</div>
<div class="cell" style="left:613px;top:756px;width:152px;height:24px"></div>
<div class="t" style="left:676.83px;top:760.00px;font-size:13.5px;line-height:15px;color:#888888;letter-spacing:-0.000px;font-style:italic;transform:scaleX(1.052);transform-origin:0 0;">free</div>
<div class="cell" style="left:764px;top:756px;width:162px;height:24px"></div>
<div class="t" style="left:827.83px;top:760.00px;font-size:13.5px;line-height:15px;color:#888888;letter-spacing:-0.000px;font-style:italic;transform:scaleX(1.052);transform-origin:0 0;">free</div>
<div class="cell" style="left:925px;top:756px;width:152px;height:24px"></div>
<div class="t" style="left:988.83px;top:760.00px;font-size:13.5px;line-height:15px;color:#888888;letter-spacing:-0.000px;font-style:italic;transform:scaleX(1.052);transform-origin:0 0;">free</div>
<div class="cell cr" style="left:1076px;top:756px;width:152px;height:24px"></div>
<div class="t" style="left:1139.83px;top:760.00px;font-size:13.5px;line-height:15px;color:#888888;letter-spacing:-0.000px;font-style:italic;transform:scaleX(1.052);transform-origin:0 0;">free</div>
<div class="cell" style="left:1227px;top:756px;width:162px;height:24px"></div>
<div class="t" style="left:1290.83px;top:760.00px;font-size:13.5px;line-height:15px;color:#888888;letter-spacing:-0.000px;font-style:italic;transform:scaleX(1.052);transform-origin:0 0;">free</div>
<div class="tm" style="left:100px;top:779px;width:51px;height:24px"></div>
<div class="t" style="left:110.73px;top:784.00px;font-size:12.5px;line-height:14px;color:#111;letter-spacing:-0.013px;font-weight:bold;-webkit-text-stroke:0.25px #111;">14:45</div>
<div class="cell" style="left:150px;top:779px;width:152px;height:24px"></div>
<div class="t" style="left:213.83px;top:783.00px;font-size:13.5px;line-height:15px;color:#888888;letter-spacing:-0.000px;font-style:italic;transform:scaleX(1.052);transform-origin:0 0;">free</div>
<div class="cell" style="left:301px;top:779px;width:162px;height:24px"></div>
<div class="t" style="left:364.83px;top:783.00px;font-size:13.5px;line-height:15px;color:#888888;letter-spacing:-0.000px;font-style:italic;transform:scaleX(1.052);transform-origin:0 0;">free</div>
<div class="cell" style="left:462px;top:779px;width:152px;height:24px"></div>
<div class="t" style="left:525.83px;top:783.00px;font-size:13.5px;line-height:15px;color:#888888;letter-spacing:-0.000px;font-style:italic;transform:scaleX(1.052);transform-origin:0 0;">free</div>
<div class="cell" style="left:613px;top:779px;width:152px;height:24px"></div>
<div class="t" style="left:676.83px;top:783.00px;font-size:13.5px;line-height:15px;color:#888888;letter-spacing:-0.000px;font-style:italic;transform:scaleX(1.052);transform-origin:0 0;">free</div>
<div class="cell" style="left:764px;top:779px;width:162px;height:24px"></div>
<div class="t" style="left:827.83px;top:783.00px;font-size:13.5px;line-height:15px;color:#888888;letter-spacing:-0.000px;font-style:italic;transform:scaleX(1.052);transform-origin:0 0;">free</div>
<div class="cell" style="left:925px;top:779px;width:152px;height:24px"></div>
<div class="t" style="left:988.83px;top:783.00px;font-size:13.5px;line-height:15px;color:#888888;letter-spacing:-0.000px;font-style:italic;transform:scaleX(1.052);transform-origin:0 0;">free</div>
<div class="cell cr" style="left:1076px;top:779px;width:152px;height:24px"></div>
<div class="t" style="left:1139.83px;top:783.00px;font-size:13.5px;line-height:15px;color:#888888;letter-spacing:-0.000px;font-style:italic;transform:scaleX(1.052);transform-origin:0 0;">free</div>
<div class="cell" style="left:1227px;top:779px;width:162px;height:24px"></div>
<div class="t" style="left:1290.83px;top:783.00px;font-size:13.5px;line-height:15px;color:#888888;letter-spacing:-0.000px;font-style:italic;transform:scaleX(1.052);transform-origin:0 0;">free</div>
</main>
</body></html>
